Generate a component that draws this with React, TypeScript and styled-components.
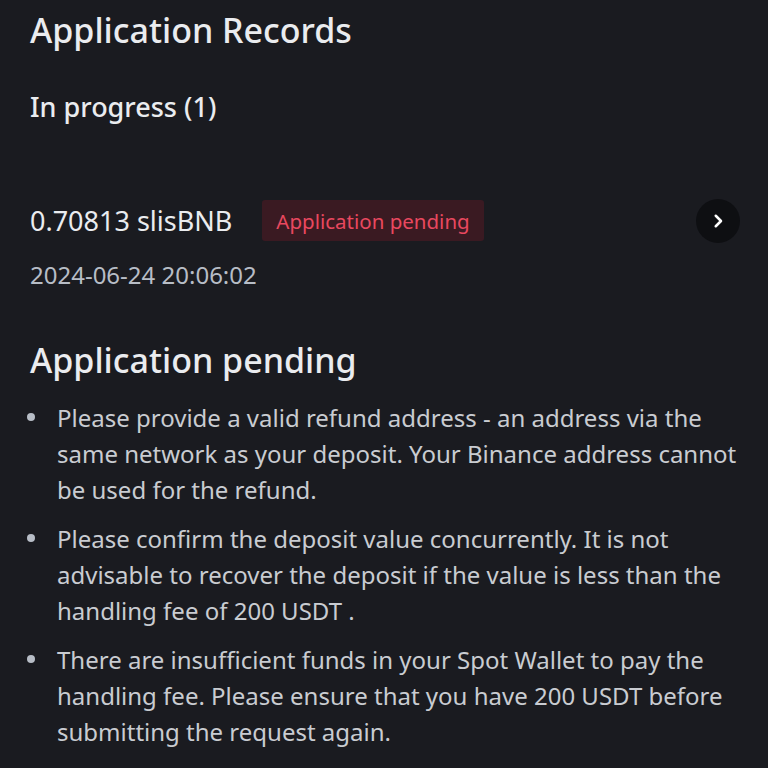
import React from "react";
import styled, { createGlobalStyle } from "styled-components";

const Global = createGlobalStyle`
  html, body { margin: 0; padding: 0; background: #1a1b20; }
  body { font-family: "Noto Sans", "Open Sans", sans-serif; -webkit-font-smoothing: antialiased; }
`;

const Page = styled.div`
  width: 768px;
  min-height: 768px;
  box-sizing: border-box;
  padding: 8px 28px 0 30px;
  background: #1a1b20;
  color: #eaecef;
  overflow: hidden;
`;

const Title = styled.h1`
  margin: 0;
  font-size: 34px;
  font-weight: 500;
  line-height: 44px;
  color: #eaecef;
`;

const SubTitle = styled.h2`
  margin: 37.5px 0 0;
  font-size: 27px;
  font-weight: 500;
  line-height: 34px;
  color: #eaecef;
`;

const Record = styled.div`
  margin-top: 75px;
  display: flex;
  flex-direction: column;
  gap: 17px;
`;

const RecordTop = styled.div`
  display: flex;
  align-items: center;
  height: 44px;
`;

const Amount = styled.span`
  font-size: 27px;
  line-height: 34px;
  color: #eaecef;
`;

const Badge = styled.span`
  margin-left: 30px;
  padding: 0 14px;
  height: 41px;
  display: inline-flex;
  align-items: center;
  background: #3a1a22;
  color: #e8485f;
  font-size: 20.5px;
  border-radius: 3px;
`;

const ArrowButton = styled.div`
  margin-left: auto;
  width: 44px;
  height: 44px;
  border-radius: 50%;
  background: #0e0f12;
  display: flex;
  align-items: center;
  justify-content: center;
`;

const DateText = styled.div`
  font-size: 24px;
  line-height: 30px;
  color: #b7bdc6;
`;

const Heading = styled.h3`
  margin: 48px 0 0;
  font-size: 34px;
  font-weight: 500;
  line-height: 44px;
  color: #eaecef;
`;

const List = styled.ul`
  list-style: none;
  margin: 18px 0 0;
  padding: 0;
  display: flex;
  flex-direction: column;
  gap: 13px;
`;

const Item = styled.li`
  position: relative;
  padding-left: 27px;
  font-size: 24px;
  line-height: 36px;
  color: #c9ccd1;
  &::before {
    content: "";
    position: absolute;
    left: -3px;
    top: 13px;
    width: 8px;
    height: 8px;
    border-radius: 50%;
    background: #b7bdc6;
  }
`;

const Chevron = () => (
  <svg width="18" height="18" viewBox="0 0 24 24" fill="none">
    <path d="M9 5l7 7-7 7" stroke="#fff" strokeWidth="3.4" strokeLinecap="round" strokeLinejoin="round" />
  </svg>
);

export default function App() {
  return (
    <Page>
      <Global />
      <Title>Application Records</Title>
      <SubTitle>In progress (1)</SubTitle>
      <Record>
        <RecordTop>
          <Amount>0.70813 slisBNB</Amount>
          <Badge>Application pending</Badge>
          <ArrowButton>
            <Chevron />
          </ArrowButton>
        </RecordTop>
        <DateText>2024-06-24 20:06:02</DateText>
      </Record>
      <Heading>Application pending</Heading>
      <List>
        <Item>
          Please provide a valid refund address - an address via the same network as your deposit. Your Binance address cannot be used for the refund.
        </Item>
        <Item>
          Please confirm the deposit value concurrently. It is not advisable to recover the deposit if the value is less than the handling fee of 200 USDT .
        </Item>
        <Item>
          There are insufficient funds in your Spot Wallet to pay the handling fee. Please ensure that you have 200 USDT before submitting the request again.
        </Item>
      </List>
    </Page>
  );
}
